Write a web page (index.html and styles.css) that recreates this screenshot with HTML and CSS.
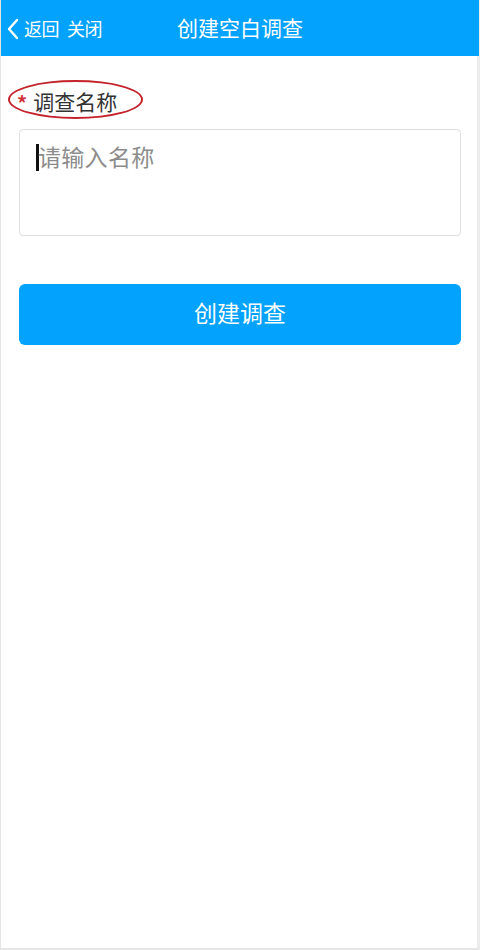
FILE: index.html
```html
<!DOCTYPE html>
<html lang="zh-CN">
<head>
<meta charset="utf-8">
<title>创建空白调查</title>
<link rel="stylesheet" href="styles.css">
</head>
<body>
<div class="screen">
  <header class="topbar">
    <div class="nav-left">
      <svg class="chev" width="13" height="22" viewBox="0 0 13 22"><path d="M11 2 L3 11 L11 20" fill="none" stroke="#fff" stroke-width="2.4" stroke-linecap="round" stroke-linejoin="round"/></svg>
      <span class="nav-link">返回</span>
      <span class="nav-link close">关闭</span>
    </div>
    <div class="title">创建空白调查</div>
  </header>
  <main class="content">
    <div class="field-label">
      <span class="req">*</span><span class="label-text">调查名称</span>
    </div>
    <div class="textarea">
      <span class="caret"></span><span class="placeholder">请输入名称</span>
    </div>
    <button class="submit">创建调查</button>
  </main>
</div>
</body>
</html>
```
FILE: styles.css
```css
html, body {
  margin: 0;
  padding: 0;
  background: #fff;
}
body {
  font-family: "Noto Sans CJK SC", "Noto Sans", sans-serif;
}
.screen {
  box-sizing: border-box;
  width: 480px;
  height: 950px;
  border: 1px solid #e4e4e4;
  border-top: none;
  border-right: 3px solid #ececec;
  border-bottom: 2px solid #e6e6e6;
  display: flex;
  flex-direction: column;
}
.topbar {
  height: 56px;
  background: #03a2fd;
  display: flex;
  align-items: center;
  position: relative;
  margin-right: -2px;
  color: #fff;
}
.nav-left {
  display: flex;
  align-items: center;
  padding-left: 5px;
  height: 100%;
}
.chev {
  display: block;
  margin-right: 5px;
  margin-top: 1px;
}
.nav-link {
  font-size: 18px;
  line-height: 24px;
  letter-spacing: -0.5px;
}
.close {
  margin-left: 8px;
}
.title {
  position: absolute;
  left: 0;
  right: 0;
  top: 0;
  height: 56px;
  line-height: 54px;
  text-align: center;
  font-size: 21px;
  pointer-events: none;
}
.content {
  padding: 0 16px 0 18px;
  display: flex;
  flex-direction: column;
}
.field-label {
  position: relative;
  display: flex;
  align-items: center;
  margin-top: 31px;
  height: 28px;
  align-self: flex-start;
}
.field-label::before {
  content: "";
  position: absolute;
  left: -11px;
  top: -7px;
  width: 131px;
  height: 35px;
  border: 2px solid #c4232b;
  border-radius: 50%;
}
.req {
  color: #d0343a;
  font-size: 20px;
  font-weight: bold;
  margin-right: 6px;
  margin-left: -2px;
  line-height: 20px;
  margin-top: 4px;
}
.label-text {
  font-size: 21px;
  color: #333;
  line-height: 28px;
}
.textarea {
  box-sizing: border-box;
  margin-top: 14px;
  height: 107px;
  border: 1px solid #dedede;
  border-radius: 4px;
  padding: 13px 0 0 16px;
  display: flex;
  align-items: flex-start;
}
.caret {
  width: 3px;
  height: 27px;
  background: #111;
  margin-top: 1px;
  margin-right: -1px;
}
.placeholder {
  font-size: 23px;
  color: #8c8c8c;
  line-height: 26px;
  letter-spacing: 0.3px;
}
.submit {
  margin-top: 48px;
  height: 61px;
  border: none;
  border-radius: 6px;
  background: #03a2fd;
  color: #fff;
  font-family: "Noto Sans CJK SC", "Noto Sans", sans-serif;
  font-size: 23px;
  padding: 0 0 5px 0;
  line-height: 30px;
}
```
